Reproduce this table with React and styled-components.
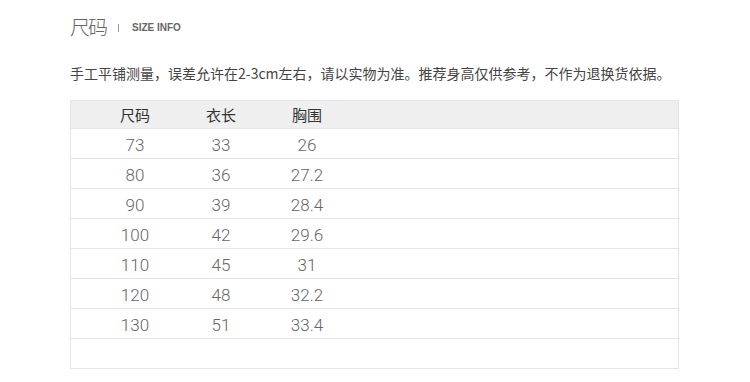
import styled, { createGlobalStyle } from "styled-components";

const GlobalStyle = createGlobalStyle`
  html, body {
    margin: 0;
    padding: 0;
    background: #fff;
  }
  body {
    font-family: "Noto Sans CJK SC", "Liberation Sans", sans-serif;
  }
`;

const Page = styled.div`
  width: 750px;
  height: 382px;
  padding: 12px 71px 0 70px;
  box-sizing: border-box;
`;

const Heading = styled.div`
  display: flex;
  align-items: center;
  height: 28px;
`;

const HeadingTitle = styled.span`
  font-size: 20px;
  font-weight: 300;
  color: #666;
  letter-spacing: -2px;
`;

const Divider = styled.span`
  width: 1px;
  height: 8px;
  background: #999;
  margin: 3px 13px 0 12px;
`;

const HeadingSub = styled.span`
  font-family: "Liberation Sans", Arial, sans-serif;
  font-size: 10px;
  font-weight: bold;
  color: #666;
  margin-top: 3px;
`;

const Note = styled.p`
  margin: 23px 0 17px;
  font-size: 14px;
  line-height: 20px;
  color: #444;
  white-space: nowrap;
`;

const Table = styled.div`
  border: 1px solid #e4e4e4;
`;

const Row = styled.div`
  display: grid;
  grid-template-columns: repeat(3, 86px);
  padding-left: 21px;
  align-items: center;
  height: ${(p) => (p.$head ? "27px" : "29px")};
  background: ${(p) => (p.$head ? "#efefef" : "#fff")};
  border-bottom: ${(p) => (p.$last ? "none" : "1px solid #e4e4e4")};
`;

const HeadCell = styled.div`
  text-align: center;
  font-size: 15px;
  color: #333;
`;

const Cell = styled.div`
  text-align: center;
  font-family: Roboto, "Liberation Sans", sans-serif;
  font-weight: 300;
  font-size: 17px;
  color: #666;
  padding-top: 2px;
`;

const sizes = [
  ["73", "33", "26"],
  ["80", "36", "27.2"],
  ["90", "39", "28.4"],
  ["100", "42", "29.6"],
  ["110", "45", "31"],
  ["120", "48", "32.2"],
  ["130", "51", "33.4"],
];

export default function App() {
  return (
    <>
      <GlobalStyle />
      <Page>
        <Heading>
          <HeadingTitle>尺码</HeadingTitle>
          <Divider />
          <HeadingSub>SIZE INFO</HeadingSub>
        </Heading>
        <Note>
          手工平铺测量，误差允许在2-3cm左右，请以实物为准。推荐身高仅供参考，不作为退换货依据。
        </Note>
        <Table>
          <Row $head>
            <HeadCell>尺码</HeadCell>
            <HeadCell>衣长</HeadCell>
            <HeadCell>胸围</HeadCell>
          </Row>
          {sizes.map((r) => (
            <Row key={r[0]}>
              {r.map((v, i) => (
                <Cell key={i}>{v}</Cell>
              ))}
            </Row>
          ))}
          <Row $last />
        </Table>
      </Page>
    </>
  );
}
